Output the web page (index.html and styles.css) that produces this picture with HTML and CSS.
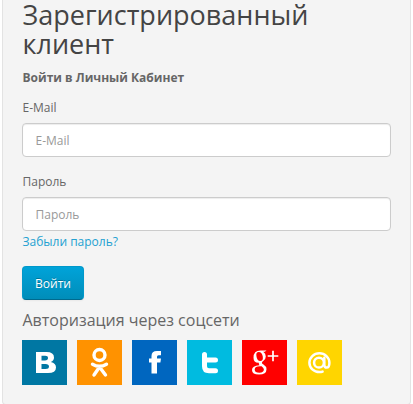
FILE: index.html
```html
<!DOCTYPE html>
<html lang="ru">
<head>
<meta charset="utf-8">
<title>Вход</title>
<link rel="stylesheet" href="styles.css">
</head>
<body>
<main class="well">
  <h2 class="title">Зарегистрированный клиент</h2>
  <p class="lead">Войти в Личный Кабинет</p>
  <form>
    <div class="group">
      <label for="email">E-Mail</label>
      <input id="email" type="text" placeholder="E-Mail">
    </div>
    <div class="group">
      <label for="password">Пароль</label>
      <input id="password" type="password" placeholder="Пароль">
      <a class="forgot" href="#">Забыли пароль?</a>
    </div>
    <button class="submit" type="button">Войти</button>
  </form>
  <h4 class="subtitle">Авторизация через соцсети</h4>
  <div class="socials">
    <a class="social vk" href="#"><svg viewBox="0 0 45 45"><path fill-rule="evenodd" d="M14 12h10.500q7.500 0 7.500 5.500q0 3.300-3.200 4.600q5.200 1.100 5.200 5.400q0 5.500-8 5.500H14zM19.500 15.700v4.700h3.500q3 0 3-2.400t-3-2.300zM19.500 24v5h4q3.500 0 3.500-2.500T23.500 24z"/></svg></a>
    <a class="social ok" href="#"><svg viewBox="0 0 45 45"><g class="line"><circle cx="22.500" cy="15" r="5.500" stroke-width="3.400"/><path stroke-width="3.400" d="M15.500 24.200q7 4.200 14 0M22.500 27l-5.500 8M22.500 27l6 8"/></g></svg></a>
    <a class="social fb" href="#"><svg viewBox="0 0 45 45"><path d="M19.500 33.500V22.500H17v-4h2.500v-2.500q0-5 5.500-5h4v4.300h-2.500q-1.500 0-1.500 1.500v1.700h4l-.6 4H25v11z"/></svg></a>
    <a class="social tw" href="#"><svg viewBox="0 0 45 45"><path class="line" stroke-width="5" d="M17.500 14.500v11.800q0 4.500 4.500 4.500h6.500M18 20.100h10.500"/></svg></a>
    <a class="social gp" href="#"><svg viewBox="0 0 45 45"><path fill-rule="evenodd" d="M17 10.500h7.500l-1.700 1.300h-1.600q2.600 1.600 2.600 4.700q0 2.500-2.300 4.200q-1.600 1.200-1.600 2q0 .8 1.600 1.900q3 1.900 3 4.600q0 5.300-7.500 5.300q-7 0-7-4.500q0-4.400 7.500-4.800q-1-1-.6-2.400q-5.400.3-5.400-5.100q0-7.200 7-7.200zM16.700 11.900q-2.900 0-2.300 4.200q.6 5 3.900 5q3 0 2.500-4.300q-.7-4.900-4.100-4.900zM18 26.200q-5.300 0-5.300 3.200q0 3.300 4.800 3.300q4.400 0 4.400-3.100q0-1.600-2.300-3.300z"/><path class="line plus" stroke-width="1.700" d="M31 10.700v10.600M25.700 16h10.600"/></svg></a>
    <a class="social mail" href="#"><svg viewBox="0 0 45 45"><g class="line" stroke-width="2.500"><circle cx="22" cy="22.700" r="4.900"/><path d="M27.300 17.700v7q0 2.900 2.400 2.900q2.700 0 2.700-4.900a10 9.400 0 1 0-10 9.400q1.800 0 3.200-.5"/></g></svg></a>
  </div>
</main>
</body>
</html>
```
FILE: styles.css
```css
* { box-sizing: border-box; }
html { overflow: hidden; }
body {
  margin: 0;
  background: #fff;
  color: #666;
  font: 12px/17px "Open Sans", sans-serif;
}
.well {
  width: 409px;
  height: 405px;
  margin-left: 2px;
  padding: 0 19px 0 19.5px;
  background: #f4f4f4;
  border: 1px solid #e3e3e3;
  border-top: 0;
  border-radius: 0 0 4px 4px;
}
.title {
  margin: 0 0 11px;
  color: #444;
  font-size: 27px;
  font-weight: 400;
  line-height: 29px;
}
.lead { margin: 0 0 13px; font-weight: 700; }
.group { margin-bottom: 16px; }
label { display: block; margin-bottom: 7px; }
input {
  display: block;
  width: 369px;
  height: 34px;
  margin-left: -.5px;
  padding: 6px 12.5px;
  border: 1px solid #ccc;
  border-radius: 4px;
  background: #fff;
  box-shadow: inset 0 1px 1px rgba(0, 0, 0, .075);
  color: #555;
  font: inherit;
}
input::placeholder { color: #999; opacity: 1; }
.forgot {
  display: block;
  margin-top: 2px;
  color: #23a1d1;
  text-decoration: none;
}
.submit {
  display: block;
  width: 62px;
  height: 34px;
  margin-left: -.5px;
  padding: 0;
  border: 1px solid;
  border-color: #0098ca #0098ca #006a8e;
  border-radius: 4px;
  background: linear-gradient(#00a3d9, #008db9);
  box-shadow: 0 1px 2px rgba(0, 0, 0, .05);
  color: #fff;
  font: 500 12px/17px "Open Sans", sans-serif;
  text-shadow: 0 -1px 0 rgba(0, 0, 0, .25);
}
.subtitle {
  margin: 11px 0 10px;
  color: #666;
  font-size: 16px;
  font-weight: 400;
  line-height: 19px;
}
.socials { display: flex; gap: 10px; margin-left: -.5px; }
.social { width: 45px; height: 45px; }
.social svg { display: block; fill: #fff; }
.line { fill: none; stroke: #fff; stroke-linecap: round; }
.plus { stroke-linecap: butt; }
.vk { background: #0077a3; }
.ok { background: #ff9200; }
.fb { background: #0066bf; }
.tw { background: #00bbe0; }
.gp { background: #f00; }
.mail { background: #ffd500; }
```
